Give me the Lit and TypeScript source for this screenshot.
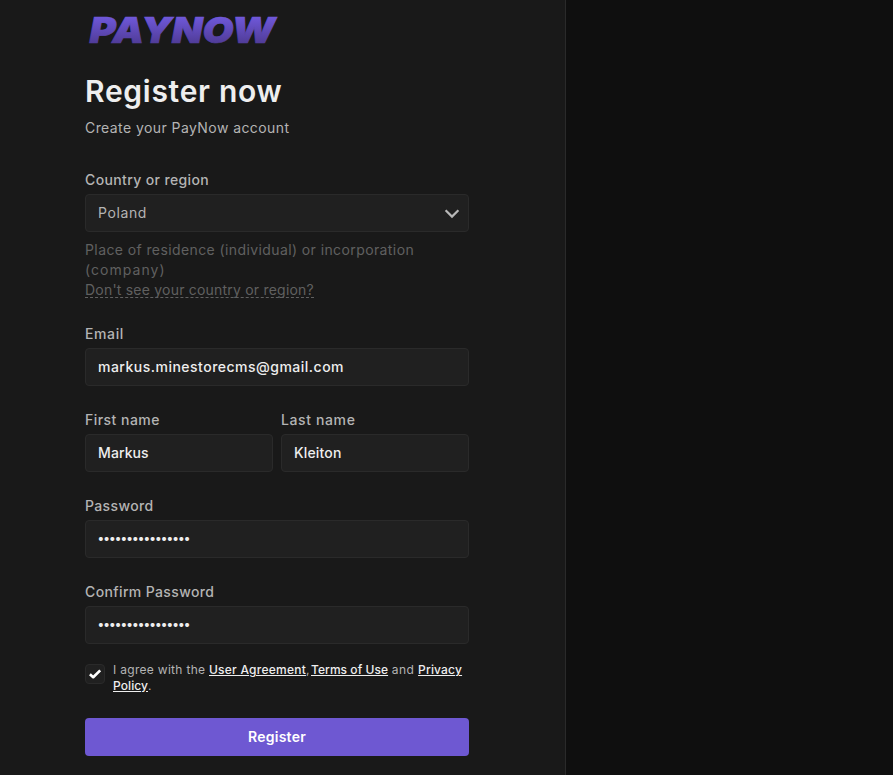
import { LitElement, html, css } from "lit";
import { customElement } from "lit/decorators.js";

@customElement("paynow-logo")
export class PaynowLogo extends LitElement {
  static styles = css`
    :host { display: block; height: 60px; }
    svg { display: block; overflow: visible; }
    text {
      font: italic 900 36px Inter, "Liberation Sans", sans-serif;
      fill: url(#fade);
      stroke: url(#fade);
      stroke-width: 0.7px;
    }
  `;

  render() {
    return html`
      <svg width="200" height="60" viewBox="0 0 200 60" role="img" aria-label="PayNow">
        <defs>
          <linearGradient id="fade" gradientUnits="userSpaceOnUse" x1="0" y1="16" x2="0" y2="44">
            <stop offset="0" stop-color="#7059dc" />
            <stop offset="1" stop-color="#4f3b96" />
          </linearGradient>
        </defs>
        <text x="4.6" y="43" textLength="185.5" lengthAdjust="spacingAndGlyphs">PAYNOW</text>
      </svg>
    `;
  }
}

@customElement("app-root")
export class AppRoot extends LitElement {
  static styles = css`
    :host {
      display: block;
      height: 775px;
      overflow: hidden;
      background: #0f0f0f;
      color: #b4b4b4;
      font: 400 14px/20px Inter, "Liberation Sans", sans-serif;
    }
    * { box-sizing: border-box; }
    .panel {
      width: 566px;
      height: 100%;
      padding-left: 85px;
      background: #191919;
      border-right: 1px solid #2a2a2a;
    }
    .column { width: 384px; display: flex; flex-direction: column; }
    h1 {
      margin: 11px 0 7px;
      font-size: 30px;
      line-height: 40px;
      font-weight: 600;
      letter-spacing: 0.72px;
      color: #eee;
      white-space: nowrap;
    }
    .subtitle { margin: 0 0 32px; letter-spacing: 0.425px; }
    form { display: flex; flex-direction: column; gap: 24px; }
    .field { display: flex; flex-direction: column; gap: 4px; }
    .row { display: grid; grid-template-columns: 1fr 1fr; gap: 8px; }
    label { font-weight: 500; letter-spacing: 0.37px; }
    .l-email { letter-spacing: 0.62px; }
    .l-first { letter-spacing: 0.47px; }
    .l-last { letter-spacing: 0.62px; }
    .control {
      display: flex;
      align-items: center;
      justify-content: space-between;
      width: 100%;
      height: 38px;
      margin: 0;
      padding: 0 12px;
      border: 1px solid #2a2a2a;
      border-radius: 4px;
      outline: none;
      background: #202020;
      color: #eee;
      font: inherit;
      font-weight: 500;
    }
    input.control { padding-bottom: 2px; }
    .select { padding-right: 8px; color: #b4b4b4; font-weight: 400; letter-spacing: 0.6px; }
    .v-email { letter-spacing: 0.49px; }
    .v-first { letter-spacing: 0.1px; }
    .v-last { letter-spacing: 0.16px; }
    input.v-secret { font-size: 12.5px; letter-spacing: -0.91px; padding: 0 12px 1px 11.5px; }
    .help { height: 60px; margin-top: 4px; color: #606060; }
    .help div { white-space: nowrap; }
    .h1 { letter-spacing: 0.4px; }
    .h2 { letter-spacing: 1.05px; }
    .h3 {
      display: block;
      width: 229px;
      height: 18px;
      white-space: nowrap;
      letter-spacing: 0.21px;
      border-bottom: 1px dashed #606060;
    }
    .agree {
      display: flex;
      gap: 8px;
      margin-top: -6px;
      font-size: 12px;
      line-height: 16px;
    }
    .box {
      flex: none;
      width: 20px;
      height: 20px;
      margin-top: 2px;
      border: 1px solid #2a2a2a;
      border-radius: 4px;
      background: #202020;
    }
    .box svg, .select svg { display: block; }
    .terms { letter-spacing: 0.3px; white-space: nowrap; }
    .terms a {
      color: #eee;
      font-weight: 500;
      text-decoration: underline;
      text-decoration-thickness: 1px;
      text-underline-offset: 1px;
    }
    .terms .a-user { letter-spacing: 0.24px; }
    .terms .a-terms { letter-spacing: 0.05px; }
    .terms .a-priv { letter-spacing: 0.18px; }
    .terms .a-pol { letter-spacing: 0.08px; }
    .comma { letter-spacing: -0.9px; }
    .and { letter-spacing: 0.41px; }
    button {
      height: 38px;
      border: 0;
      border-radius: 4px;
      background: #6e58d2;
      color: #fff;
      font: inherit;
      font-weight: 600;
      letter-spacing: 0.25px;
    }
  `;

  private field(label: string, labelClass: string, value: string, valueClass: string) {
    return html`
      <div class="field">
        <label class=${labelClass}>${label}</label>
        <input class="control ${valueClass}" .value=${value} />
      </div>
    `;
  }

  render() {
    const secret = "•".repeat(16);
    return html`
      <main class="panel">
        <div class="column">
          <paynow-logo></paynow-logo>
          <h1>Register now</h1>
          <p class="subtitle">Create your PayNow account</p>
          <form>
            <div class="field">
              <label>Country or region</label>
              <div class="control select">
                <span>Poland</span>
                <svg width="16" height="16" viewBox="0 0 16 16" fill="none" stroke="#b8b8b8" stroke-width="2.2">
                  <path d="M1.6 5.3 8 11.6 14.4 5.3" />
                </svg>
              </div>
              <div class="help">
                <div class="h1">Place of residence (individual) or incorporation</div>
                <div class="h2">(company)</div>
                <a class="h3">Don't see your country or region?</a>
              </div>
            </div>
            ${this.field("Email", "l-email", "markus.minestorecms@gmail.com", "v-email")}
            <div class="row">
              ${this.field("First name", "l-first", "Markus", "v-first")}
              ${this.field("Last name", "l-last", "Kleiton", "v-last")}
            </div>
            ${this.field("Password", "", secret, "v-secret")}
            ${this.field("Confirm Password", "", secret, "v-secret")}
            <div class="agree">
              <span class="box">
                <svg width="18" height="18" viewBox="0 0 18 18" fill="none" stroke="#fff" stroke-width="2.7" stroke-linejoin="round">
                  <path d="M3.9 9.3 7.2 12.2 14.2 5.4" />
                </svg>
              </span>
              <div class="terms">I agree with the <a class="a-user">User Agreement</a><span class="comma">, </span><a class="a-terms">Terms of Use</a><span class="and"> and </span><a class="a-priv">Privacy</a><br /><a class="a-pol">Policy</a>.</div>
            </div>
            <button type="button">Register</button>
          </form>
        </div>
      </main>
    `;
  }
}
